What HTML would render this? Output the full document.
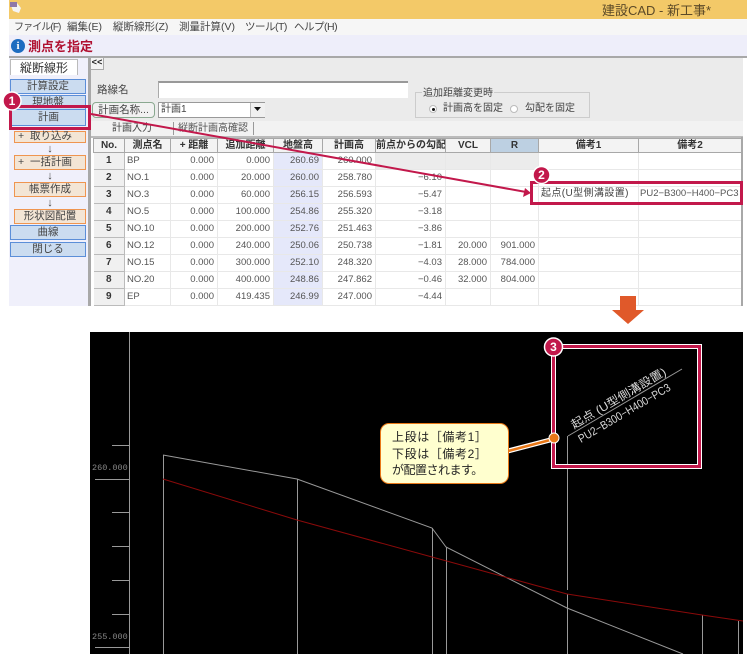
<!DOCTYPE html>
<html lang="ja"><head><meta charset="utf-8"><style>
html,body{margin:0;padding:0;background:#fff}
body{width:747px;height:654px;position:relative;overflow:hidden;font-family:"Liberation Sans","Noto Sans CJK JP",sans-serif;font-size:10px;color:#333}
.a{position:absolute;white-space:nowrap}
.m{top:21px;font-size:10.5px;line-height:13px;color:#444}
.b{position:absolute;box-sizing:border-box;text-align:center;font-size:10.5px;line-height:13px;color:#444}
.bl{background:#cbdcf0;border:1px solid #5b8ed8}
.or{background:#f3e5d5;border:1px solid #ef9550}
.ar{position:absolute;left:36px;width:28px;text-align:center;font-size:11px;line-height:11px;color:#444}
table{position:absolute;left:93px;top:138px;width:648px;border-collapse:collapse;table-layout:fixed;background:#fff}
td,th{padding:0 3px 0 2px;height:17px;line-height:12px;box-sizing:border-box;border:1px solid #e8e8e8;font-size:9.5px;font-weight:normal;color:#555;text-align:right;overflow:hidden;white-space:nowrap}
th{height:14px;background:#f3f3f3;border:1px solid #a8a8a8;border-width:1px 1px 1px 0;text-align:center;font-weight:bold;color:#333;font-size:10px;padding:0}
td.n{background:#f0f0f0;border:1px solid #bbb;border-width:0 1px 1px 0;text-align:center;font-weight:bold;font-size:10px;color:#333;padding:0}
td.l{text-align:left}
td.g{background:#e5e8fa}
</style></head><body>
<div class="a" style="left:9px;top:0;width:738px;height:19px;background:#f3c968"></div>
<svg class="a" style="left:9px;top:1px" width="15" height="14"><path d="M1 2h7l4 5-2 5-6-2z" fill="#f4f4f4"/><path d="M1 1h7v5H1z" fill="#8f78a8"/></svg>
<div class="a" style="left:602px;top:3px;font-size:13px;line-height:15px;color:#5c4a28">建設CAD - 新工事*</div>
<div class="a" style="left:9px;top:19px;width:738px;height:16px;background:#f6f6f6"></div>
<div class="a m" style="left:14px;font-size:10px;letter-spacing:-.9px">ファイル(F)</div>
<div class="a m" style="left:67px">編集(E)</div>
<div class="a m" style="left:113px">縦断線形(Z)</div>
<div class="a m" style="left:179px">測量計算(V)</div>
<div class="a m" style="left:245px;letter-spacing:-.5px">ツール(T)</div>
<div class="a m" style="left:294px;letter-spacing:-.5px">ヘルプ(H)</div>
<div class="a" style="left:9px;top:35px;width:738px;height:21px;background:#eeeefa"></div>
<div class="a" style="left:11px;top:39px;width:14px;height:14px;border-radius:50%;background:#1d6cc0;color:#fff;font:bold 11px/14px 'Liberation Serif',serif;text-align:center">i</div>
<div class="a" style="left:28px;top:39px;font-size:13px;line-height:15px;font-weight:bold;color:#b01030">測点を指定</div>
<div class="a" style="left:9px;top:56px;width:738px;height:2px;background:#a8a8a8"></div>
<div class="a" style="left:9px;top:58px;width:79px;height:248px;background:#f0f0fb"></div>
<div class="a" style="left:88px;top:58px;width:3px;height:248px;background:#a8a8a8"></div>
<div class="a" style="left:91px;top:58px;width:652px;height:63px;background:#ebebeb"></div>
<div class="a" style="left:91px;top:121px;width:652px;height:16px;background:#f2f2f2"></div>
<div class="a" style="left:91px;top:137px;width:652px;height:169px;background:#fff"></div>
<div class="b" style="left:10px;top:59px;width:68px;height:16px;background:#fff;border:1px solid #bbb;border-bottom:0;font-size:12px;line-height:16px;color:#333">縦断線形</div>
<div class="b bl" style="left:10px;top:79px;width:76px;height:15px">計算設定</div>
<div class="b bl" style="left:10px;top:95px;width:76px;height:15px">現地盤</div>
<div class="b bl" style="left:11px;top:109px;width:75px;height:17px;line-height:15px">計画</div>
<div class="b or" style="left:14px;top:131px;width:72px;height:12px;line-height:9px;text-align:left;padding-left:3px">+ &nbsp;取り込み</div>
<div class="ar" style="top:144px">↓</div>
<div class="b or" style="left:14px;top:155px;width:72px;height:15px;text-align:left;padding-left:3px">+ &nbsp;一括計画</div>
<div class="ar" style="top:171px">↓</div>
<div class="b or" style="left:14px;top:182px;width:72px;height:15px">帳票作成</div>
<div class="ar" style="top:198px">↓</div>
<div class="b or" style="left:14px;top:209px;width:72px;height:15px">形状図配置</div>
<div class="b bl" style="left:10px;top:225px;width:76px;height:15px">曲線</div>
<div class="b bl" style="left:10px;top:242px;width:76px;height:15px">閉じる</div>
<div class="a" style="left:90px;top:57px;width:14px;height:13px;background:#f4f4f4;border:1px solid #aaa;box-sizing:border-box;font:bold 9px/10px 'Liberation Mono',monospace;text-align:center;color:#222">&lt;&lt;</div>
<div class="a" style="left:97px;top:84px;font-size:10.5px;line-height:13px;color:#444">路線名</div>
<div class="a" style="left:158px;top:81px;width:250px;height:17px;background:#fff;border-top:2px solid #999;border-left:1px solid #aaa;box-sizing:border-box"></div>
<div class="a" style="left:92px;top:102px;width:63px;height:16px;box-sizing:border-box;background:#f1f1f1;border:1px solid #8aa890;border-radius:4px;font-size:10.5px;line-height:14px;text-align:center;color:#444">計画名称...</div>
<div class="a" style="left:158px;top:102px;width:107px;height:16px;box-sizing:border-box;background:#fff;border:1px solid #999;font-size:10px;line-height:14px;padding-left:2px;color:#444">計画1</div>
<div class="a" style="left:250px;top:103px;width:14px;height:14px;background:#f0f0f0;border-left:1px solid #bbb"></div>
<svg class="a" style="left:254px;top:107px" width="8" height="5"><path d="M0 0h7L3.500 4z" fill="#111"/></svg>
<div class="a" style="left:415px;top:92px;width:175px;height:26px;box-sizing:border-box;border:1px solid #ccc"></div>
<div class="a" style="left:422px;top:87px;background:#ebebeb;padding:0 1px;font-size:10px;line-height:13px;color:#444">追加距離変更時</div>
<div class="a" style="left:429px;top:105px;width:8px;height:8px;border-radius:50%;background:#fff;box-sizing:border-box;border:1px solid #bbb"></div>
<div class="a" style="left:432px;top:108px;width:3px;height:3px;border-radius:50%;background:#111"></div>
<div class="a" style="left:443px;top:102px;font-size:10px;line-height:14px;color:#444">計画高を固定</div>
<div class="a" style="left:510px;top:105px;width:8px;height:8px;border-radius:50%;background:#fff;box-sizing:border-box;border:1px solid #bbb"></div>
<div class="a" style="left:525px;top:102px;font-size:10px;line-height:14px;color:#444">勾配を固定</div>
<div class="a" style="left:112px;top:122px;font-size:10px;line-height:14px;color:#444">計画入力</div>
<div class="a" style="left:173px;top:122px;width:1px;height:13px;background:#999"></div>
<div class="a" style="left:178px;top:122px;font-size:10px;line-height:14px;color:#555">縦断計画高確認</div>
<div class="a" style="left:253px;top:122px;width:1px;height:13px;background:#999"></div>
<div class="a" style="left:91px;top:136px;width:652px;height:2px;background:#bbb"></div>
<table><colgroup><col style="width:31px"><col style="width:46px"><col style="width:47px"><col style="width:56px"><col style="width:49px"><col style="width:53px"><col style="width:70px"><col style="width:45px"><col style="width:48px"><col style="width:100px"><col style="width:103px"></colgroup>
<tr><th style="border-left:1px solid #a8a8a8">No.</th><th>測点名</th><th>+ 距離</th><th>追加距離</th><th>地盤高</th><th>計画高</th><th>前点からの勾配</th><th>VCL</th><th style="background:#bdd0e2">R</th><th>備考1</th><th>備考2</th></tr>
<tr><td class="n">1</td><td class="l">BP</td><td>0.000</td><td>0.000</td><td class="g">260.69</td><td>260.000</td><td style="background:#ececec"></td><td style="background:#ececec"></td><td style="background:#ececec"></td><td></td><td></td></tr>
<tr><td class="n">2</td><td class="l">NO.1</td><td>0.000</td><td>20.000</td><td class="g">260.00</td><td>258.780</td><td>−6.10</td><td></td><td></td><td></td><td></td></tr>
<tr><td class="n">3</td><td class="l">NO.3</td><td>0.000</td><td>60.000</td><td class="g">256.15</td><td>256.593</td><td>−5.47</td><td></td><td></td><td></td><td></td></tr>
<tr><td class="n">4</td><td class="l">NO.5</td><td>0.000</td><td>100.000</td><td class="g">254.86</td><td>255.320</td><td>−3.18</td><td></td><td></td><td></td><td></td></tr>
<tr><td class="n">5</td><td class="l">NO.10</td><td>0.000</td><td>200.000</td><td class="g">252.76</td><td>251.463</td><td>−3.86</td><td></td><td></td><td></td><td></td></tr>
<tr><td class="n">6</td><td class="l">NO.12</td><td>0.000</td><td>240.000</td><td class="g">250.06</td><td>250.738</td><td>−1.81</td><td>20.000</td><td>901.000</td><td></td><td></td></tr>
<tr><td class="n">7</td><td class="l">NO.15</td><td>0.000</td><td>300.000</td><td class="g">252.10</td><td>248.320</td><td>−4.03</td><td>28.000</td><td>784.000</td><td></td><td></td></tr>
<tr><td class="n">8</td><td class="l">NO.20</td><td>0.000</td><td>400.000</td><td class="g">248.86</td><td>247.862</td><td>−0.46</td><td>32.000</td><td>804.000</td><td></td><td></td></tr>
<tr><td class="n">9</td><td class="l">EP</td><td>0.000</td><td>419.435</td><td class="g">246.99</td><td>247.000</td><td>−4.44</td><td></td><td></td><td></td><td></td></tr>
<tr><td class="n"></td><td></td><td></td><td></td><td class="g"></td><td></td><td></td><td></td><td></td><td></td><td></td></tr>
</table>
<div class="a" style="left:0;top:306px;width:747px;height:26px;background:#fff"></div>
<div class="a" style="left:741px;top:137px;width:2px;height:169px;background:#a8a8a8"></div>
<div class="a" style="left:541px;top:187px;font-size:10px;line-height:13px;letter-spacing:.4px;color:#444">起点(U型側溝設置)</div>
<div class="a" style="left:640px;top:187px;font-size:9.5px;line-height:13px;color:#555">PU2−B300−H400−PC3</div>
<svg class="a" style="left:0;top:0" width="747" height="654">
<path d="M620 296h16v14h8l-16 14-16-14h8z" fill="#e0592a"/>
<rect x="90" y="332" width="653" height="322" fill="#000"/>
<g stroke="#999" stroke-width="1" fill="none" shape-rendering="crispEdges">
<path d="M129.500 332V654M112 445.500h17M95 479.500h34M112 512.500h17M112 546.500h17M112 580.500h17M112 614.500h17M95 647.500h34"/>
<path d="M163.500 455V654M297.500 479V654M432.500 528V654M446.500 547V654M567.500 436V590M567.500 594V654M702.500 615V654M738.500 621V654"/>
</g>
<path d="M163 455L297 479 432 528 446 547 567 608 683 654" stroke="#999" fill="none"/>
<path d="M163 479L297 520 432 557 505 577 567 594 702 615 743 621" stroke="#8a0a0a" fill="none"/>
<path d="M568 436L682 369" stroke="#999" fill="none"/>
<text x="92" y="470" font-family="Liberation Mono,monospace" font-size="8.500" fill="#888">260.000</text>
<text x="92" y="639" font-family="Liberation Mono,monospace" font-size="8.500" fill="#888">255.000</text>
<text transform="translate(574,429) rotate(-30.500)" font-family="Liberation Sans,Noto Sans CJK JP,sans-serif" font-size="11.500" fill="#d8d8d8" textLength="108" lengthAdjust="spacingAndGlyphs">起点 (U型側溝設置)</text>
<text transform="translate(581,443) rotate(-30.500)" font-family="Liberation Sans,sans-serif" font-size="11.500" fill="#d8d8d8" textLength="105" lengthAdjust="spacingAndGlyphs">PU2−B300−H400−PC3</text>
<rect x="553.500" y="346.500" width="146" height="120" fill="none" stroke="#fff" stroke-width="5"/>
<rect x="553.500" y="346.500" width="146" height="120" fill="none" stroke="#c2184b" stroke-width="3"/>
<path d="M508 451L554 439" stroke="#fff" stroke-width="5"/>
<path d="M508 451L554 439" stroke="#e97817" stroke-width="2.500"/>
<circle cx="554" cy="438" r="5" fill="#e97817" stroke="#fff"/>
<path d="M91 114L526 192" stroke="#c2184b" stroke-width="2" fill="none"/>
<path d="M531 193L523 197 525 188z" fill="#c2184b"/>
<rect x="10.500" y="106.500" width="79" height="22" fill="none" stroke="#c2184b" stroke-width="3"/>
<rect x="531.500" y="182.500" width="210" height="21" fill="none" stroke="#c2184b" stroke-width="3"/>
<circle cx="12" cy="101" r="9" fill="#c2184b" stroke="#fff" stroke-width="1.500"/>
<circle cx="541.500" cy="175" r="8.500" fill="#c2184b" stroke="#fff" stroke-width="1.500"/>
<circle cx="553.500" cy="347" r="9" fill="#c2184b" stroke="#fff" stroke-width="1.500"/>
<g font-family="Liberation Sans,sans-serif" font-size="12" font-weight="bold" fill="#fff" text-anchor="middle">
<text x="12" y="105">1</text><text x="541.500" y="179">2</text><text x="553.500" y="351">3</text></g>
</svg>
<div class="a" style="left:380px;top:423px;width:129px;height:61px;box-sizing:border-box;background:#ffffcf;border:1px solid #e97817;border-radius:9px;padding:5px 0 0 11px;font-size:12px;line-height:16.500px;color:#222"><span style="letter-spacing:.6px">上段は［備考1］</span><br><span style="letter-spacing:.6px">下段は［備考2］</span><br><span style="letter-spacing:-.5px">が配置されます。</span></div>
</body></html>
